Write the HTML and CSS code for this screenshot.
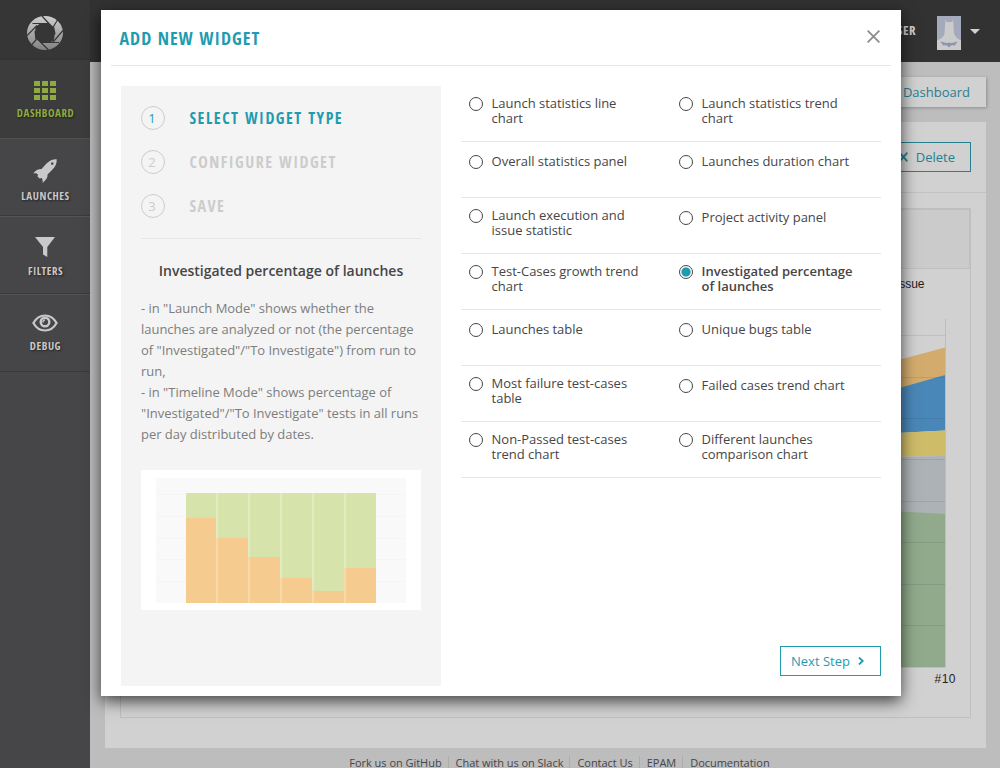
FILE: index.html
```html
<!DOCTYPE html>
<html lang="en">
<head>
<meta charset="utf-8">
<title>Add new widget</title>
<link rel="stylesheet" href="styles.css">
</head>
<body>
<div class="app">
  <nav class="sidebar">
    <div class="logo">
      <svg width="36" height="36" viewBox="0 0 36 36">
        <defs><linearGradient id="lg" x1="0" y1="0" x2="0" y2="1"><stop offset="0" stop-color="#cecece"/><stop offset="1" stop-color="#828282"/></linearGradient></defs>
        <path fill="url(#lg)" fill-rule="evenodd" d="M18 1a18 17 0 1 1 0 34a18 17 0 1 1 0-34zM13 8.500L8.500 12L8 18L9 24L14 27.500H22L26.500 26L28 19L26.500 12L22 8.500z"/>
        <g stroke="#363636" stroke-width="1.200" fill="none"><path d="M15 1L25 12M5.500 8.500H22M30.500 5L26.500 11.500L28 19M36 15.500L26 27M32 27.500H13M21.500 35L10 23.500M4.500 30L9 25L8 16M0 20.500L10 10.500"/></g>
      </svg>
    </div>
    <a class="nav-item active">
      <svg width="22" height="19" viewBox="0 0 22 19" fill="#8fab3f"><path d="M0 0h6v5H0zM8 0h6v5H8zM16 0h6v5h-6zM0 7h6v5H0zM8 7h6v5H8zM16 7h6v5h-6zM0 14h6v5H0zM8 14h6v5H8zM16 14h6v5h-6z"/></svg>
      <span>DASHBOARD</span>
    </a>
    <a class="nav-item launches">
      <svg width="24" height="24" viewBox="0 0 24 24" fill="#c9c9c9"><path fill-rule="evenodd" d="M23.700.2C24 4 22.500 7.500 19.500 10.500L14.500 15.500C15 18.500 13 21 9.500 24C10 21.500 9.500 20 8.500 19L6.500 19.500L4.500 17.500L5 15.500C4 14.500 2.500 14 .3 14.300C2.500 11.500 5 10 8.500 10L13.500 4.500C16.500 1.500 20 0 23.700.2zM19.200 3.200a1.300 1.300 0 1 0 .1 0z"/></svg>
      <span>LAUNCHES</span>
    </a>
    <a class="nav-item filters">
      <svg width="20" height="20" viewBox="0 0 20 20" fill="#c9c9c9"><path d="M0 0H20L12.300 10V20L8 17.500V10z"/></svg>
      <span>FILTERS</span>
    </a>
    <a class="nav-item debug">
      <svg width="26" height="18" viewBox="0 0 26 18" fill="none" stroke="#c9c9c9"><path stroke-width="2.200" d="M1.400 9C7 -1 19 -1 24.600 9C19 19 7 19 1.400 9z"/><circle cx="13" cy="8" r="4.300" stroke-width="2.400"/><path stroke-width="1.500" d="M11 8.500V7.500a2 2 0 0 1 2-1.500"/></svg>
      <span>DEBUG</span>
    </a>
  </nav>
  <div class="main">
    <header class="topbar">
      <span class="user">DEFAULT USER</span>
      <svg class="avatar" width="24" height="34" viewBox="0 0 24 34"><path fill="#a4aabc" d="M0 0h24v34H0z"/><path fill="#cbcbcb" d="M8.500 3L9.500 6h5.500L16 3L17 17.500q2 5 7 7V34H0V24.500Q6 22.500 7.500 17.500z"/><path fill="#8e96ad" d="M3 25.500q4 .5 6 1.500h2l1-1 1 1h2q2-1 6-1.500q-2 1.500-3 4-3-.5-4 0L12 31.500l-2-2q-2-.5-4 0-1-2.500-3-4z"/></svg>
      <svg class="caret" width="10" height="5" viewBox="0 0 10 5"><path fill="#d1d1d1" d="M0 0h10L5 5z"/></svg>
    </header>
    <div class="crumbs"><a class="crumb">Add New Dashboard</a></div>
    <section class="board">
      <div class="board-tools">
        <a class="delete"><svg width="9" height="10" viewBox="0 0 9 10"><path stroke="#258092" stroke-width="1.800" d="M.7.700L8.300 9.300M8.300.700L.7 9.300"/></svg>Delete</a>
      </div>
      <div class="widget">
        <div class="widget-head"></div>
        <svg class="chart" width="849" height="447" viewBox="1 0 849 447">
          <text x="804.500" y="19" text-anchor="end" class="chart-text">To Investigate Issue</text>
          <path fill="#d3ac6d" d="M700 112L825 78.500V106L700 162z"/>
          <path fill="#4a87b9" d="M700 157L781 118.500L825 106V161.500L700 168z"/>
          <path fill="#cfbc69" d="M700 168L825 161.500V187L700 189z"/>
          <path fill="#acb2b5" d="M700 189L825 187V247L700 240z"/>
          <path fill="#91aa8b" d="M700 238L825 245V398H700z"/>
          <path stroke="#000" stroke-opacity=".08" d="M700 66.500H825M700 108.500H825M700 149.500H825M700 190.500H825M700 232.500H825M700 273.500H825M700 315.500H825M700 356.500H825"/>
          <path stroke="#bdbdbd" fill="none" d="M825.500 50V398.500H700"/>
          <text x="814.500" y="414" class="chart-text" textLength="21">#10</text>
        </svg>
      </div>
    </section>
    <footer class="links"><a>Fork us on GitHub</a><a>Chat with us on Slack</a><a>Contact Us</a><a>EPAM</a><a>Documentation</a></footer>
  </div>
</div>

<div class="modal">
  <div class="modal-head">
    <h1>ADD NEW WIDGET</h1>
    <svg class="close" width="13" height="13" viewBox="0 0 13 13"><path stroke="#8d8d8d" stroke-width="1.800" d="M.6.600L12.400 12.400M12.400.600L.6 12.400"/></svg>
  </div>
  <div class="modal-body">
    <aside class="steps-panel">
      <ol class="steps">
        <li class="current"><i>1</i><b>SELECT WIDGET TYPE</b></li>
        <li><i>2</i><b>CONFIGURE WIDGET</b></li>
        <li><i>3</i><b>SAVE</b></li>
      </ol>
      <h2>Investigated percentage of launches</h2>
      <p>- in "Launch Mode" shows whether the<br>launches are analyzed or not (the percentage<br>of "Investigated"/"To Investigate") from run to<br>run,<br>- in "Timeline Mode" shows percentage of<br>"Investigated"/"To Investigate" tests in all runs<br>per day distributed by dates.</p>
      <svg class="preview" width="280" height="140" viewBox="0 0 280 140" shape-rendering="crispEdges">
        <path fill="#fff" d="M0 0h280v140H0z"/>
        <path fill="#f9f9f9" d="M15 8h250v125H15z"/>
        <path stroke="#f5f5f5" d="M16 24.500h248M16 46.500h248M16 68.500h248M16 89.500h248M16 111.500h248"/>
        <path fill="#e1ebc2" d="M45 23h190v110H45z"/>
        <path fill="#d6e3aa" d="M45 23h30v110H45zM77 23h30v110H77zM109 23h30v110h-30zM141 23h30v110h-30zM173 23h30v110h-30zM205 23h30v110h-30z"/>
        <path fill="#f6d9aa" d="M75 68h2v65h-2zM107 87h2v46h-2zM139 108h2v25h-2zM171 120h2v13h-2zM203 98h2v35h-2z"/>
        <path fill="#f6cb8f" d="M45 48h30v85H45zM77 68h30v65H77zM109 87h30v46h-30zM141 108h30v25h-30zM173 121h30v12h-30zM205 98h30v35h-30z"/>
      </svg>
    </aside>
    <div class="choices">
      <div class="types">
        <label><i></i><span>Launch statistics line<br>chart</span></label>
        <label><i></i><span>Launch statistics trend<br>chart</span></label>
        <label class="single"><i></i><span>Overall statistics panel</span></label>
        <label class="single"><i></i><span>Launches duration chart</span></label>
        <label><i></i><span>Launch execution and<br>issue statistic</span></label>
        <label class="single"><i></i><span>Project activity panel</span></label>
        <label><i></i><span>Test-Cases growth trend<br>chart</span></label>
        <label class="checked"><i></i><span>Investigated percentage<br>of launches</span></label>
        <label class="single"><i></i><span>Launches table</span></label>
        <label class="single"><i></i><span>Unique bugs table</span></label>
        <label><i></i><span>Most failure test-cases<br>table</span></label>
        <label class="single"><i></i><span>Failed cases trend chart</span></label>
        <label><i></i><span>Non-Passed test-cases<br>trend chart</span></label>
        <label><i></i><span>Different launches<br>comparison chart</span></label>
      </div>
      <button class="next">Next Step<svg width="6" height="8" viewBox="0 0 6 8"><path fill="none" stroke="#1f9bb0" stroke-width="1.800" d="M1 .5L4.700 4L1 7.500"/></svg></button>
    </div>
  </div>
</div>
</body>
</html>
```
FILE: styles.css
```css
* { box-sizing: border-box; }
body { margin: 0; height: 768px; overflow: hidden; background: #bdbdbd; font: 13px/15px "Open Sans", sans-serif; color: #464547; }
svg { display: block; flex: none; }
i { font-style: normal; }
.app { display: grid; grid-template-columns: 90px 1fr; height: 768px; }

.sidebar { background: #464547; }
.logo { height: 60px; background: #363636; border-bottom: 1px solid #333; padding: 15px 0 0 27px; }
.nav-item { height: 77px; display: flex; flex-direction: column; align-items: center; border-bottom: 1px solid #3a393b; border-top: 1px solid #535254; color: #c9c9c9; padding-top: 20px; }
.nav-item span { font: bold 11px/14px "Open Sans Condensed", "Open Sans", sans-serif; font-stretch: 75%; letter-spacing: .55px; text-shadow: 1px 1px 2px #222; margin: 7px 0 0 1px; }
.nav-item.active { height: 78px; background: #3c3c3c; color: #8fab3f; border-top-color: #3c3c3c; }
.nav-item.active span { margin-top: 6px; }
.nav-item.launches { height: 78px; }
.nav-item.launches span { margin-top: 6px; }
.nav-item.filters { height: 78px; }
.nav-item.debug { height: 78px; padding-top: 19px; }

.topbar { height: 62px; background: #323232; display: flex; justify-content: flex-end; align-items: flex-start; padding: 16px 20px 0 0; }
.user { font: bold 13px/16px "Open Sans Condensed", "Open Sans", sans-serif; font-stretch: 75%; letter-spacing: .5px; color: #d1d1d1; padding: 6px 21px 0 0; }
.avatar { margin-right: 9px; }
.caret { margin-top: 13px; }
.crumbs { display: flex; justify-content: flex-end; padding: 15px 14px; }
.crumb { height: 30px; background: #d1d1d1; padding: 0 16px; line-height: 30px; color: #258092; box-shadow: 1px 1px 3px rgba(0,0,0,.25); }
.board { width: 881px; height: 626px; margin-left: 15px; background: #d1d1d1; }
.board-tools { height: 71px; border-bottom: 1px solid #c1c1c1; display: flex; justify-content: flex-end; padding: 20px 15px; }
.delete { height: 30px; display: flex; align-items: center; gap: 8px; padding: 0 15px 0 14px; border: 1px solid #258092; color: #258092; }
.widget { height: 510px; margin: 15px 15px 0; border: 1px solid #bfbfbf; }
.widget-head { height: 60px; background: #cbcbcb; border: 1px solid #c0c0c0; border-width: 1px 1px 1px 0; }
.chart-text { font: 12px "Liberation Sans", Arial, sans-serif; fill: #222; }
.links { display: flex; justify-content: center; padding: 8px 0 0 28px; font-size: 11px; color: #464547; }
.links a { padding: 0 6px 0 7px; white-space: nowrap; border-left: 1px solid #adadad; line-height: 14px; letter-spacing: -.03px; }
.links a:first-child { border: 0; }

.modal { position: absolute; left: 101px; top: 10px; width: 800px; height: 686px; background: #fff; padding: 0 10px; box-shadow: 0 5px 15px rgba(0,0,0,.7); }
.modal-head { height: 56px; border-bottom: 1px solid #e6e6e6; display: flex; justify-content: space-between; padding: 19px 11px 0 8.500px; }
.close { margin-top: 1px; }
h1 { margin: -3px 0 0; font: bold 18px/24px "Open Sans Condensed", "Open Sans", sans-serif; font-stretch: 75%; letter-spacing: 1px; color: #1f9bb0; }
.modal-body { display: flex; gap: 20px; padding: 20px 10px 0; }
.steps-panel { width: 320px; height: 600px; background: #f4f4f4; padding: 20px; }
.steps { list-style: none; margin: 0; padding: 0; height: 133px; border-bottom: 1px solid #e6e6e6; color: #ccc; }
.steps li { display: flex; gap: 24.500px; height: 44px; }
.steps i { width: 24px; height: 24px; border: 1px solid #ccc; border-radius: 50%; line-height: 23px; text-align: center; padding-right: 2px; }
.steps b { font: bold 16px/24px "Open Sans Condensed", "Open Sans", sans-serif; font-stretch: 75%; letter-spacing: 1.500px; }
.steps .current { color: #1f9bb0; }
h2 { margin: 22px 0 17px; font: 600 14px/20px "Open Sans", sans-serif; text-align: center; color: #464547; }
p { margin: 0; line-height: 21px; letter-spacing: -.02px; color: #7d7d7d; white-space: nowrap; }
.preview { margin-top: 25px; }

.choices { width: 420px; display: flex; flex-direction: column; justify-content: space-between; height: 590px; }
.types { display: grid; grid-template-columns: 210px 210px; grid-auto-rows: 56px; letter-spacing: -.02px; }
.types label { display: flex; gap: 8.600px; padding: 10px 0 0 8px; border-bottom: 1px solid #e6e6e6; white-space: nowrap; }
.types .single { padding-top: 12px; }
.types i { width: 14px; height: 14px; flex: none; border: 1px solid #464547; border-radius: 50%; margin-top: 1px; }
.types .checked { font-weight: 600; }
.types .checked i { background: radial-gradient(circle, #1f9bb0 4.2px, #fff 5px); }
.next { align-self: flex-end; width: 101px; height: 30px; display: flex; align-items: center; gap: 8px; padding: 0 10px; background: #fff; border: 1px solid #1f9bb0; color: #1f9bb0; font: 13px "Open Sans", sans-serif; white-space: nowrap; }
```
